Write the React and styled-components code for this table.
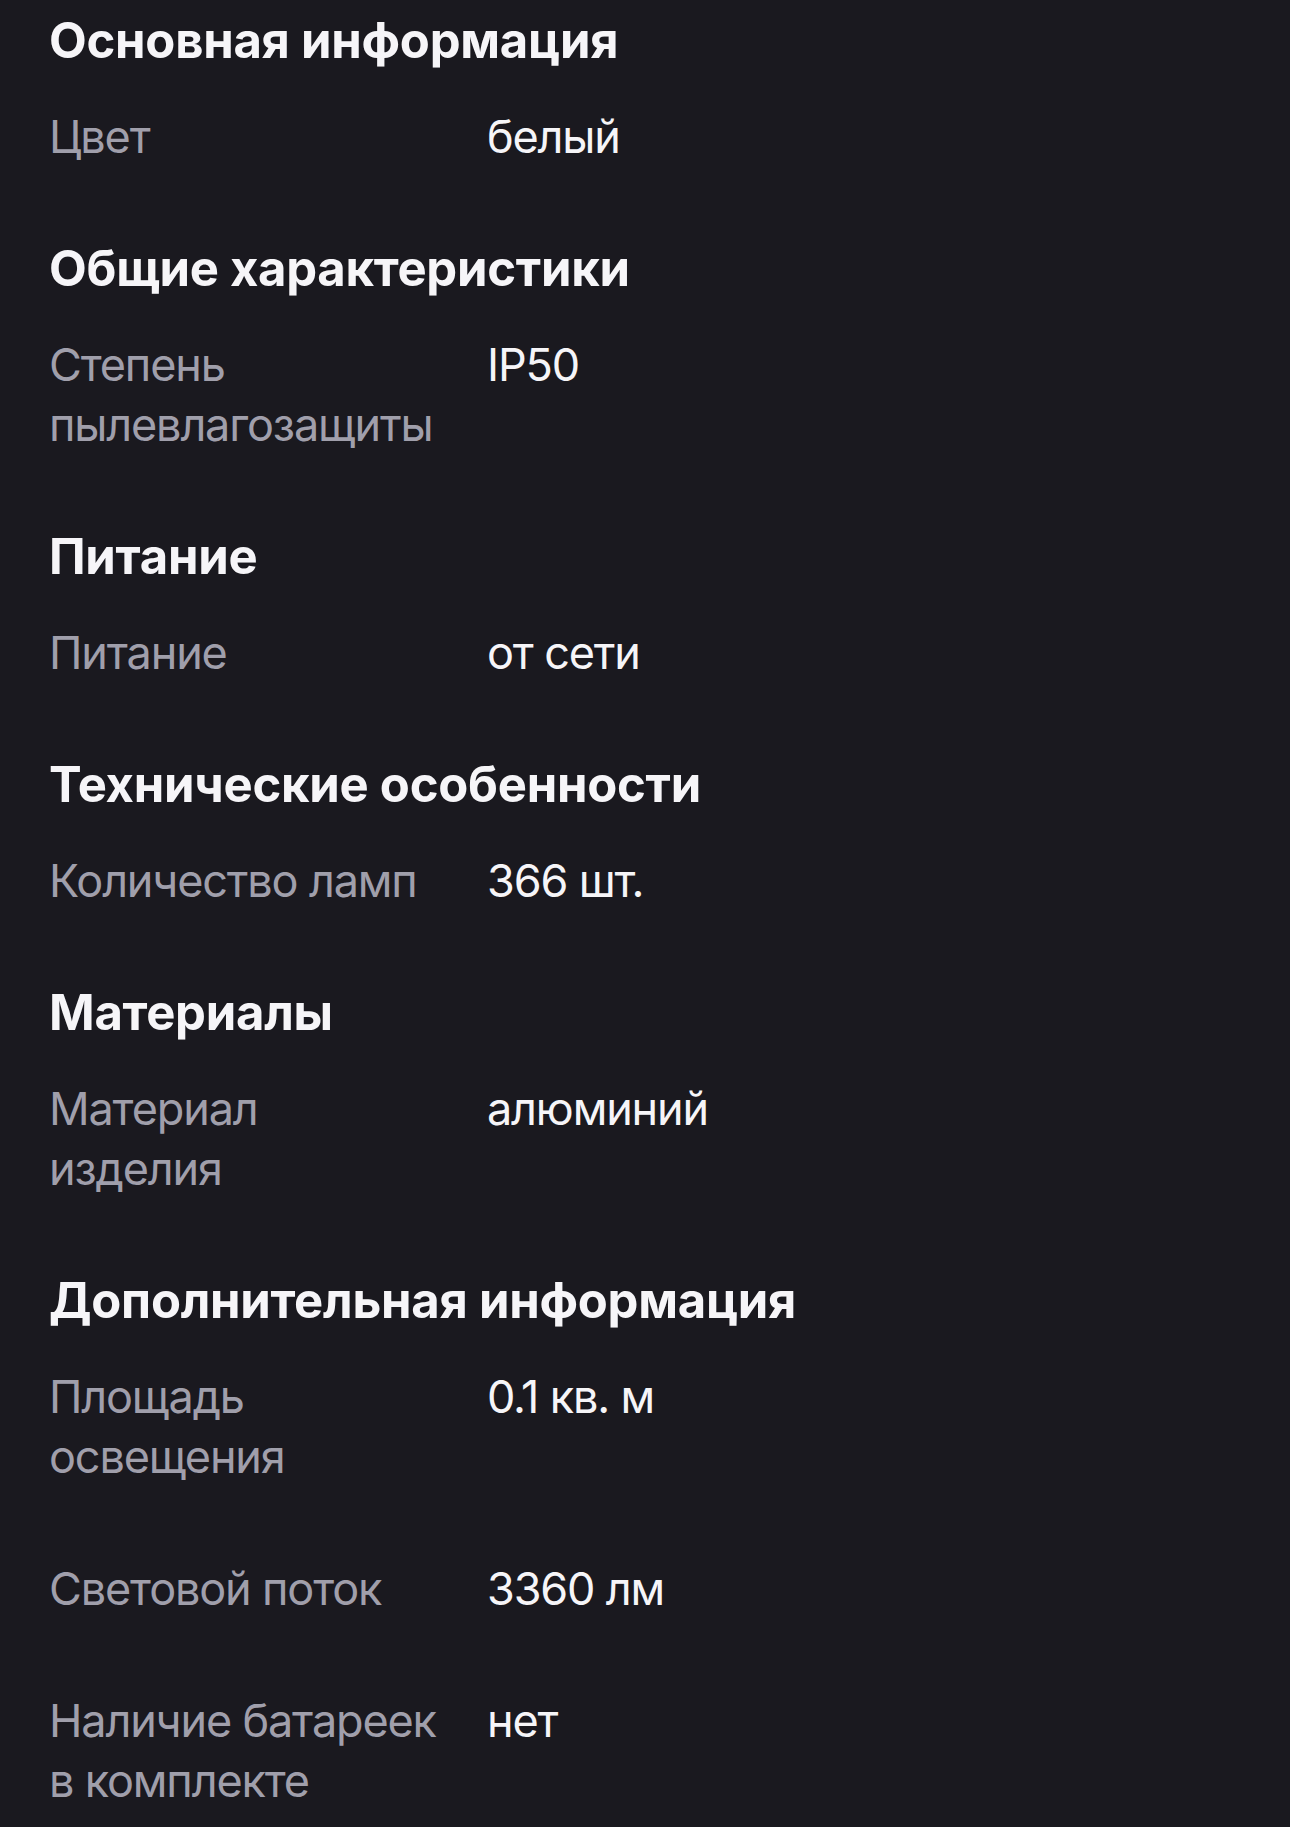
import React from 'react'
import styled, { createGlobalStyle } from 'styled-components'

const GlobalStyle = createGlobalStyle`
    html, body {
        margin: 0;
        padding: 0;
        background: #1a191f;
    }
    body {
        font-family: Inter, "Noto Sans", "Liberation Sans", sans-serif;
        -webkit-font-smoothing: antialiased;
    }
`

const specs = [
    {
        title: 'Основная информация',
        rows: [{ name: 'Цвет', value: 'белый' }],
    },
    {
        title: 'Общие характеристики',
        rows: [{ name: 'Степень пылевлагозащиты', value: 'IP50' }],
    },
    {
        title: 'Питание',
        rows: [{ name: 'Питание', value: 'от сети' }],
    },
    {
        title: 'Технические особенности',
        rows: [{ name: 'Количество ламп', value: '366 шт.' }],
    },
    {
        title: 'Материалы',
        rows: [{ name: 'Материал изделия', value: 'алюминий' }],
    },
    {
        title: 'Дополнительная информация',
        rows: [
            { name: 'Площадь освещения', value: '0.1 кв. м' },
            { name: 'Световой поток', value: '3360 лм' },
            { name: 'Наличие батареек в комплекте', value: 'нет' },
        ],
    },
]

function SpecSection({ title, rows }) {
    return (
        <Section>
            <Title>{title}</Title>
            {rows.map((row) => (
                <Row key={row.name}>
                    <Name>{row.name}</Name>
                    <Value>{row.value}</Value>
                </Row>
            ))}
        </Section>
    )
}

export default function App() {
    return (
        <Page>
            <GlobalStyle />
            {specs.map((s) => (
                <SpecSection key={s.title} title={s.title} rows={s.rows} />
            ))}
        </Page>
    )
}

const Page = styled.div`
    width: 1290px;
    height: 1827px;
    overflow: hidden;
    box-sizing: border-box;
    padding: 11px 49px 0;
    background: #1a191f;
`

const Section = styled.section`
    display: flex;
    flex-direction: column;
`

const Title = styled.h2`
    margin: 0 0 36px;
    font-size: 49px;
    line-height: 60px;
    font-weight: 700;
    color: #f6f5f8;
    letter-spacing: -0.25px;
`

const Row = styled.div`
    display: grid;
    grid-template-columns: 388px 1fr;
    column-gap: 50px;
    margin-bottom: 72px;
    font-size: 45px;
    line-height: 60px;
    letter-spacing: -1.15px;
`

const Name = styled.div`
    color: #a09fab;
`

const Value = styled.div`
    color: #f6f5f8;
`
